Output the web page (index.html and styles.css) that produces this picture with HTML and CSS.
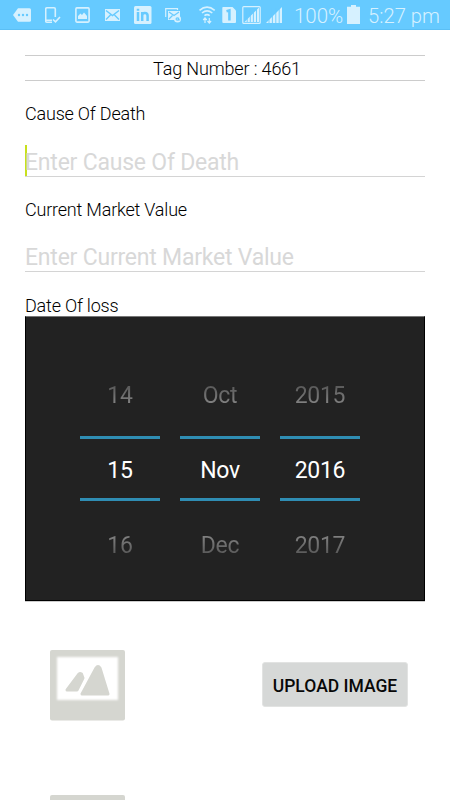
FILE: index.html
```html
<!DOCTYPE html>
<html lang="en">
<head>
<meta charset="utf-8">
<title>Loss Report</title>
<link rel="stylesheet" href="styles.css">
</head>
<body>
<header class="status">
  <svg class="ic" width="18" height="30" viewBox="13 0 18 30"><path class="f" d="M13 15L18 8.3H29.5Q31 8.3 31 9.8V20.2Q31 21.7 29.5 21.7H18Z"/><g class="cut"><circle cx="19" cy="15" r="1.2"/><circle cx="23" cy="15" r="1.2"/><circle cx="27" cy="15" r="1.2"/></g></svg>
  <svg class="ic gap14" width="16" height="30" viewBox="45 0 16 30"><path class="s" d="M52 22.3H47Q45.7 22.3 45.7 21V9Q45.7 7.7 47 7.7H54Q55.3 7.7 55.3 9V17M46 20.3H52M53 19.5L55.5 21.8L60 17"/></svg>
  <svg class="ic gap14" width="15" height="30" viewBox="75 0 15 30"><rect class="s" x="75.9" y="7.9" width="13.2" height="14.2" rx="1"/><path class="f" d="M78 19V16L80.5 13.5L82 15L84 12.5L87 16V19Z"/></svg>
  <svg class="ic gap15" width="15" height="30" viewBox="105 0 15 30"><rect class="f" x="105" y="9" width="15" height="12"/><path class="line" d="M106 10.5L112.5 15.5L119 10.5M106 19.5L110.5 15M119 19.5L114.5 15"/></svg>
  <svg class="ic gap14" width="18" height="30" viewBox="134 0 18 30"><rect class="f" x="134" y="6" width="17.5" height="18" rx="1.5"/><path class="in" d="M138 12V21M138 8.8V10.7M142.2 21V12M142.2 21V15.5Q142.2 13 144.8 13Q147.6 13 147.6 15.7V21"/></svg>
  <svg class="ic gap13" width="16" height="30" viewBox="165 0 16 30"><path class="s thin" d="M165.7 17V8.7H177.5V10"/><rect class="f" x="168" y="11" width="12" height="9"/><path class="line thin" d="M169 12L174 15.5L179 12M169 19L172.5 15.5"/><circle class="f" cx="177.5" cy="19" r="3.5"/><circle class="line thin" cx="177.3" cy="19" r="1.2"/><path class="line thin" d="M178.6 17.8V19.8H179.8"/></svg>
  <svg class="ic gap18" width="17" height="30" viewBox="199 0 17 30"><path class="s" d="M199.5 10.3Q207 3.8 214.7 10.3M202 13Q207 8.7 212.3 13M204.5 15.6Q207 13.5 209.7 15.6"/><path class="s thin" d="M205 23V18M203.2 20L205 18L206.8 20M209.3 18V23M207.5 21L209.3 23L211.1 21"/></svg>
  <svg class="ic gap6" width="14" height="30" viewBox="222 0 14 30"><path class="f" d="M223 7H232.5L236 10.5V22Q236 23 235 23H223.3Q222.3 23 222.3 22V8Q222.3 7 223 7Z"/><path class="in" d="M226.5 11.3L229.4 10.5V20.5"/></svg>
  <svg class="ic gap6" width="19" height="30" viewBox="242 0 19 30"><rect class="s thin" x="242.8" y="6.6" width="17.4" height="16.8" rx="1"/><path class="f" d="M244.5 22L259 7.5V22Z"/><path class="line hair" d="M247.2 8V22M250.3 8V22M253.4 8V22M256.5 8V22"/></svg>
  <svg class="ic gap5" width="17" height="30" viewBox="266 0 17 30"><path class="f" d="M266 23L282 7V23Z"/><path class="line hair" d="M269 8V23M272.4 8V23M275.8 8V23M279.2 8V23"/></svg>
  <span class="percent">100%</span>
  <svg class="ic" width="13" height="30" viewBox="347 0 13 30"><path class="f" d="M351 5H356V6.7H360V24H347V6.7H351Z"/></svg>
  <span class="clock">5:27 pm</span>
</header>
<main class="page">
  <h1 class="tag"><span>Tag Number : 4661</span></h1>
  <label class="label cause">Cause Of Death</label>
  <div class="field focus"><span>Enter Cause Of Death</span></div>
  <label class="label market">Current Market Value</label>
  <div class="field"><span>Enter Current Market Value</span></div>
  <label class="label date">Date Of loss</label>
  <section class="picker">
    <div class="wheel"><div class="top">14</div><div class="sel">15</div><div class="end">16</div></div>
    <div class="wheel"><div class="top">Oct</div><div class="sel">Nov</div><div class="end">Dec</div></div>
    <div class="wheel"><div class="top">2015</div><div class="sel">2016</div><div class="end">2017</div></div>
  </section>
  <section class="upload">
    <svg class="photo" width="77" height="75" viewBox="49 648 77 75"><rect class="frame" x="50" y="650" width="75" height="70.5" rx="2"/><rect class="window" x="57" y="657" width="61" height="43"/><path class="hill" d="M67 690L79 674Q80 673 81.5 674L83 678L77 690ZM82 694L96 668Q98 665 100 668L108 694Z"/></svg>
    <button class="btn"><span>UPLOAD IMAGE</span></button>
  </section>
  <section class="next"><svg class="photo" width="77" height="7" viewBox="49 648 77 7"><rect class="frame" x="50" y="650" width="75" height="70.5" rx="2"/></svg></section>
</main>
</body>
</html>
```
FILE: styles.css
```css
* { box-sizing: border-box; }
body { margin: 0; height: 800px; overflow: hidden; background: #fff; color: #000; font-family: Roboto, sans-serif; }
.status { display: flex; height: 30px; padding-left: 13px; background: linear-gradient(#66caff 29px, #5bbff5 29px); color: #d6f1ff; font-weight: 300; font-size: 20.5px; line-height: 32px; white-space: nowrap; }
.ic { flex: none; display: block; }
.gap5 { margin-left: 5px; }
.gap6 { margin-left: 6px; }
.gap13 { margin-left: 13px; }
.gap14 { margin-left: 14px; }
.gap15 { margin-left: 15px; }
.gap18 { margin-left: 18px; }
.f { fill: #d6f1ff; }
.cut { fill: #66caff; }
.s { fill: none; stroke: #d6f1ff; stroke-width: 1.6; }
.line { fill: none; stroke: #66caff; stroke-width: 1.4; }
.in { fill: none; stroke: #66caff; stroke-width: 2.5; }
.thin { stroke-width: 1.2; }
.hair { stroke-width: .9; }
.percent { width: 53px; margin-left: 11px; }
.clock { margin-left: 8px; font-size: 20.2px; }
.page { padding: 25px 25px 0; }
.tag { display: flex; justify-content: center; height: 26px; margin: 0; padding-left: 4px; border-top: 1px solid #ccc; border-bottom: 1px solid #ccc; font-size: 18px; letter-spacing: -.14px; font-weight: 300; line-height: 26px; }
.label { display: block; height: 21px; font-size: 18px; letter-spacing: -.2px; font-weight: 300; line-height: 21px; white-space: nowrap; }
.cause { margin-top: 22px; }
.field { height: 32px; margin-top: 20px; border-bottom: 1px solid #d4d4d4; color: #d8d8d8; font-size: 23px; letter-spacing: -.22px; line-height: 36px; white-space: nowrap; }
.focus { margin-top: 21px; height: 32px; box-shadow: inset 2px 0 #c8e01c; }
.market { margin-top: 22px; }
.date { margin-top: 23px; line-height: 21px; }
.picker { display: flex; justify-content: center; gap: 20px; height: 285px; padding: 42px 10px 0 0; background: #222; border: 1px solid #000; border-top-color: #777; color: #fff; font-size: 23px; letter-spacing: -.3px; text-align: center; }
.wheel { width: 80px; }
.top { height: 77px; line-height: 74px; color: transparent; background: linear-gradient(#5c5c5c 28px, #808080 44px); background-clip: text; }
.end { height: 88px; line-height: 89px; color: transparent; background: linear-gradient(#808080 35px, #5c5c5c 52px); background-clip: text; }
.sel { height: 65px; border-top: 3px solid #2f8db3; border-bottom: 3px solid #2f8db3; line-height: 64px; }
.upload { display: flex; justify-content: space-between; height: 146px; padding: 46px 17px 0 24px; border-top: 1px solid #ccc; }
.photo { display: block; flex: none; overflow: hidden; }
.frame { fill: #d5d6d0; filter: blur(.7px); }
.window { fill: #fff; filter: blur(.8px); }
.hill { fill: #d5d6d0; stroke: #d5d6d0; stroke-width: 3; stroke-linejoin: round; filter: blur(.7px); }
.btn { width: 146px; height: 45px; margin-top: 14px; padding: 0; border: 1px solid #e2e3e2; border-radius: 3px; background: #d6d8d7; color: #080808; font: 500 17.5px/45px Roboto, sans-serif; white-space: nowrap; }
.btn span { display: block; padding-top: 1px; line-height: 44px; }
.next { padding-left: 24px; margin-top: 46px; }
```
